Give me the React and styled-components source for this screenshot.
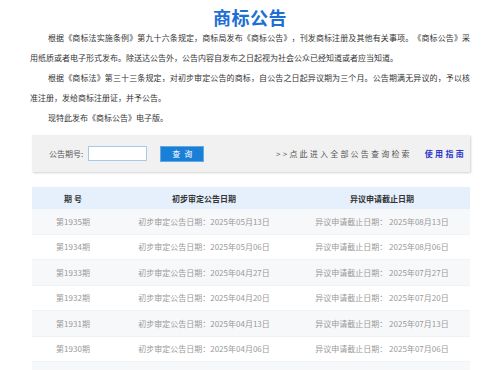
import React from "react";
import styled, { createGlobalStyle } from "styled-components";

const Global = createGlobalStyle`
  html, body { margin: 0; padding: 0; background: #fff; overflow: hidden; }
  body { font-family: "Noto Sans CJK SC", "Noto Sans", sans-serif; color: #333; }
  * { box-sizing: border-box; }
`;

const Page = styled.div`
  width: 500px;
  padding: 6px 30px 0 30px;
`;

const Title = styled.h1`
  margin: 0;
  font-size: 18px;
  line-height: 22px;
  font-weight: 700;
  color: #1d6fd6;
  text-align: center;
  letter-spacing: 0.5px;
`;

const Para = styled.p`
  margin: 0;
  font-size: 8px;
  line-height: 20px;
  text-indent: 18px;
  text-align: justify;
  text-spacing-trim: space-all;
  color: #333;
`;

const SearchBar = styled.div`
  margin: 7px 0 0 2px;
  height: 37px;
  background: #f1f1f1;
  box-shadow: 1px 1px 2px rgba(0, 0, 0, 0.18);
  display: flex;
  align-items: center;
  padding: 0 4px 0 17px;
  font-size: 8px;
`;

const Label = styled.span`
  color: #555;
  margin-right: 5px;
`;

const Input = styled.input`
  width: 59px;
  height: 15px;
  border: 1px solid #a9c9ea;
  background: #fff;
  padding: 0;
  outline: none;
`;

const Button = styled.button`
  margin-left: 13px;
  width: 44px;
  height: 16px;
  background: #1a7fd6;
  border: 1px solid #63a9e6;
  color: #fff;
  font-family: inherit;
  font-size: 8px;
  letter-spacing: 4px;
  padding: 0 0 0 4px;
  line-height: 14px;
`;

const Links = styled.div`
  margin-left: auto;
  display: flex;
  align-items: center;
  gap: 13px;
`;

const AllLink = styled.span`
  color: #555;
  letter-spacing: 2.2px;
`;

const Guide = styled.span`
  color: #2b34c9;
  font-weight: 700;
  letter-spacing: 2.3px;
`;

const Table = styled.div`
  margin: 15px 0 0 2px;
`;

const Row = styled.div`
  display: grid;
  grid-template-columns: 82px 180px 1fr;
  height: ${(p) => (p.$head ? "22px" : "25.5px")};
  align-items: center;
  text-align: center;
  font-size: 8px;
  background: ${(p) => (p.$head ? "#e5f0fc" : p.$alt ? "#f7f8fa" : "#fff")};
  color: ${(p) => (p.$head ? "#333" : "#999")};
  font-weight: ${(p) => (p.$head ? 700 : 400)};
  border-bottom: ${(p) => (p.$head ? "none" : "1px solid #f0f2f5")};
`;

const rows = [
  ["1935", "05月13日", "08月13日"],
  ["1934", "05月06日", "08月06日"],
  ["1933", "04月27日", "07月27日"],
  ["1932", "04月20日", "07月20日"],
  ["1931", "04月13日", "07月13日"],
  ["1930", "04月06日", "07月06日"],
  ["1929", "03月30日", "06月30日"],
];

export default function App() {
  return (
    <>
      <Global />
      <Page>
        <Title>商标公告</Title>
        <Para>
          根据《商标法实施条例》第九十六条规定，商标局发布《商标公告》，刊发商标注册及其他有关事项。《商标公告》采用纸质或者电子形式发布。除送达公告外，公告内容自发布之日起视为社会公众已经知道或者应当知道。
        </Para>
        <Para>
          根据《商标法》第三十三条规定，对初步审定公告的商标，自公告之日起异议期为三个月。公告期满无异议的，予以核准注册，发给商标注册证，并予公告。
        </Para>
        <Para>现特此发布《商标公告》电子版。</Para>
        <SearchBar>
          <Label>公告期号:</Label>
          <Input />
          <Button>查询</Button>
          <Links>
            <AllLink>&gt;&gt;点此进入全部公告查询检索</AllLink>
            <Guide>使用指南</Guide>
          </Links>
        </SearchBar>
        <Table>
          <Row $head>
            <span>期 号</span>
            <span>初步审定公告日期</span>
            <span>异议申请截止日期</span>
          </Row>
          {rows.map((r, i) => (
            <Row key={r[0]} $alt={i % 2 === 0}>
              <span>第{r[0]}期</span>
              <span>初步审定公告日期：2025年{r[1]}</span>
              <span>异议申请截止日期： 2025年{r[2]}</span>
            </Row>
          ))}
        </Table>
      </Page>
    </>
  );
}
